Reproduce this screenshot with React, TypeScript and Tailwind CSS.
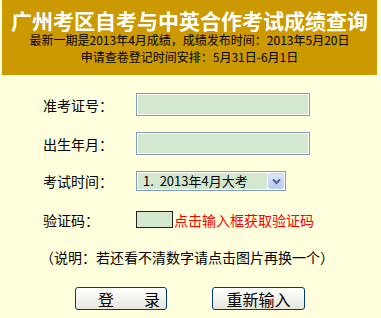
import React from "react";

const cjk = { fontFamily: '"Noto Sans CJK SC", "Noto Sans", sans-serif' };

export default function App() {
  return (
    <div className="w-[381px] h-[318px] bg-[#ffffdd] overflow-hidden" style={cjk}>
      <div className="ml-[2px] w-[375px] h-[75px] bg-[#cc9900] flex flex-col items-center">
        <div className="mt-[9px] text-white font-bold text-[21px] leading-[22px] whitespace-nowrap">
          广州考区自考与中英合作考试成绩查询
        </div>
        <div className="mt-[1px] text-black text-[12px] leading-[16px] whitespace-nowrap">
          最新一期是2013年4月成绩，成绩发布时间：2013年5月20日
        </div>
        <div className="mt-[1px] text-black text-[12px] leading-[16px] whitespace-nowrap">
          申请查卷登记时间安排：5月31日-6月1日
        </div>
      </div>

      <div className="flex items-center mt-[18px] h-[23px]">
        <div className="w-[136px] pl-[43px] text-[14px] leading-[20px] whitespace-nowrap">准考证号：</div>
        <div className="w-[174px] h-[23px] border border-[#7f9db9] bg-[#d4e8d0] shadow-[inset_0_0_0_1px_#ffffff]" />
      </div>

      <div className="flex items-center mt-[16px] h-[23px]">
        <div className="w-[136px] pl-[43px] text-[14px] leading-[20px] whitespace-nowrap">出生年月：</div>
        <div className="w-[174px] h-[23px] border border-[#7f9db9] bg-[#d4e8d0] shadow-[inset_0_0_0_1px_#ffffff]" />
      </div>

      <div className="flex items-center mt-[16px] h-[20px]">
        <div className="w-[136px] pl-[43px] text-[14px] leading-[20px] whitespace-nowrap">考试时间：</div>
        <div className="w-[150px] h-[20px] border border-[#7f9db9] bg-white p-[1px] flex">
          <div className="flex-1 bg-[#d4e8d0] flex items-center pl-[5px] text-[13px] leading-[16px] whitespace-nowrap text-black">
            1.&nbsp;&nbsp;2013年4月大考
          </div>
          <div className="w-[16px] ml-[1px] rounded-[2px] bg-gradient-to-b from-[#dce6fb] to-[#b6c9f6] border border-[#c6d4f5] flex items-center justify-center">
            <svg width="9" height="7" viewBox="0 0 9 7">
              <path d="M1 1.5 L4.5 5 L8 1.5" fill="none" stroke="#4d6185" strokeWidth="2" />
            </svg>
          </div>
        </div>
      </div>

      <div className="flex items-center mt-[20px] h-[17px]">
        <div className="w-[136px] pl-[43px] text-[14px] leading-[20px] whitespace-nowrap">验证码：</div>
        <div className="w-[37px] h-[17px] border border-[#222222] bg-[#d4e8d0]" />
        <div className="ml-[1px] text-[14px] leading-[20px] text-[#ff0000] whitespace-nowrap">点击输入框获取验证码</div>
      </div>

      <div className="mt-[19px] pl-[40px] h-[20px] text-[14px] leading-[20px] whitespace-nowrap">
        （说明：若还看不清数字请点击图片再换一个）
      </div>

      <div className="flex mt-[20px] pl-[75px]">
        <button className="w-[92px] h-[23px] border border-[#003c74] rounded-[3px] bg-gradient-to-b from-white to-[#e6e6de] flex items-center justify-center pl-[16px] text-[16px] leading-[20px] text-black">
          <span>登</span>
          <span className="w-[30px]" />
          <span>录</span>
        </button>
        <button className="ml-[45px] w-[93px] h-[23px] border border-[#003c74] rounded-[3px] bg-gradient-to-b from-white to-[#e6e6de] flex items-center justify-center text-[16px] leading-[20px] text-black">
          重新输入
        </button>
      </div>
    </div>
  );
}
